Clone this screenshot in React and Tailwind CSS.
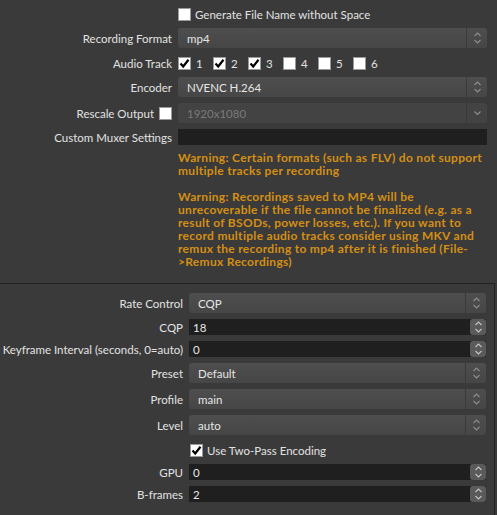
import React from 'react'

const font = { fontFamily: 'Lato, "Open Sans", sans-serif' }

const Check = ({ checked }) => (
    <span className="w-[13px] h-[13px] shrink-0 bg-white border border-[#9a9a9a] flex items-center justify-center">
        {checked && (
            <svg width="11" height="11" viewBox="0 0 11 11">
                <path d="M1.5 5.5 L4.2 8.5 L9.5 1.8" fill="none" stroke="#000" strokeWidth="2.2" />
            </svg>
        )}
    </span>
)

const UpDown = ({ color = '#8e8e8e', only }) => (
    <svg width="9" height="14" viewBox="0 0 9 14">
        {!only && <path d="M1.5 5 L4.5 2 L7.5 5" fill="none" stroke={color} strokeWidth="1.1" />}
        {!only && <path d="M1.5 9 L4.5 12 L7.5 9" fill="none" stroke={color} strokeWidth="1.1" />}
        {only && <path d="M1.5 5.5 L4.5 8.5 L7.5 5.5" fill="none" stroke={color} strokeWidth="1.1" />}
    </svg>
)

const Combo = ({ value, disabled, single }) => (
    <div className={`h-[20px] flex rounded-[3px] ${disabled ? 'bg-[#434343]' : 'bg-linear-to-b from-[#4e4e4e] to-[#464646]'}`}>
        <span className={`flex-1 flex items-center pl-[9px] ${disabled ? 'text-[#7a7a7a]' : 'text-[#e6e6e6]'}`}>{value}</span>
        <span className="w-[21px] border-l border-[#3a3a3a] flex items-center justify-center">
            <UpDown only={single} />
        </span>
    </div>
)

const Spin = ({ value }) => (
    <div className="h-[16px] flex bg-[#1f1f1f]">
        <span className="flex-1 flex items-center pl-[4px] text-[#e6e6e6]">{value}</span>
        <span className="w-[16px] rounded-[3px] bg-[#5a5a5a] flex items-center justify-center">
            <UpDown color="#c4c4c4" />
        </span>
    </div>
)

const Label = ({ children }) => (
    <span className="text-right text-[#e2e2e2] whitespace-nowrap self-center">{children}</span>
)

export default function App() {
    return (
        <div className="w-[497px] h-[515px] bg-[#3a3a3a] text-[11.5px] leading-[13px] overflow-hidden" style={font}>
            {/* top section */}
            <div className="h-[283px]">
                <div className="grid grid-cols-[172px_1fr] content-start gap-x-[6px] pr-[10px] pt-[5px]">
                    <span />
                    <div className="h-[18px] flex items-center gap-[4px] text-[#e2e2e2]">
                        <Check />
                        <span>Generate File Name without Space</span>
                    </div>

                    <div className="col-span-2 h-[5px]" />
                    <Label>Recording Format</Label>
                    <Combo value="mp4" />

                    <div className="col-span-2 h-[6px]" />
                    <Label>Audio Track</Label>
                    <div className="h-[18px] flex items-center">
                        {[1, 2, 3, 4, 5, 6].map(n => (
                            <span key={n} className="w-[35px] flex items-center gap-[5px] text-[#e2e2e2]">
                                <Check checked={n <= 3} />
                                <span>{n}</span>
                            </span>
                        ))}
                    </div>

                    <div className="col-span-2 h-[5px]" />
                    <Label>Encoder</Label>
                    <Combo value="NVENC H.264" />

                    <div className="col-span-2 h-[6px]" />
                    <div className="flex items-center justify-end gap-[5px]">
                        <span className="text-[#e2e2e2]">Rescale Output</span>
                        <Check />
                    </div>
                    <Combo value="1920x1080" disabled single />

                    <div className="col-span-2 h-[6px]" />
                    <Label>Custom Muxer Settings</Label>
                    <div className="h-[16px] bg-[#1f1f1f]" />

                    <span />
                    <div className="mt-[6px] font-bold text-[#d48f14] text-[12px] tracking-[0.3px]">
                        <p>Warning: Certain formats (such as FLV) do not support multiple tracks per recording</p>
                        <p className="mt-[13px]">Warning: Recordings saved to MP4 will be unrecoverable if the file cannot be finalized (e.g. as a result of BSODs, power losses, etc.). If you want to record multiple audio tracks consider using MKV and remux the recording to mp4 after it is finished (File-&gt;Remux Recordings)</p>
                    </div>
                </div>
            </div>

            {/* encoder settings group */}
            <div className="border-t border-r border-[#222222] w-[495px] h-[240px]">
                <div className="grid grid-cols-[183px_1fr] content-start gap-x-[6px] pr-[8px] pt-[9px]">
                    <Label>Rate Control</Label>
                    <Combo value="CQP" />

                    <div className="col-span-2 h-[6px]" />
                    <Label>CQP</Label>
                    <Spin value="18" />

                    <div className="col-span-2 h-[6px]" />
                    <Label>Keyframe Interval (seconds, 0=auto)</Label>
                    <Spin value="0" />

                    <div className="col-span-2 h-[6px]" />
                    <Label>Preset</Label>
                    <Combo value="Default" />

                    <div className="col-span-2 h-[6px]" />
                    <Label>Profile</Label>
                    <Combo value="main" />

                    <div className="col-span-2 h-[6px]" />
                    <Label>Level</Label>
                    <Combo value="auto" />

                    <div className="col-span-2 h-[6px]" />
                    <span />
                    <div className="h-[18px] flex items-center gap-[4px] pl-[1px] text-[#e2e2e2]">
                        <Check checked />
                        <span>Use Two-Pass Encoding</span>
                    </div>

                    <div className="col-span-2 h-[5px]" />
                    <Label>GPU</Label>
                    <Spin value="0" />

                    <div className="col-span-2 h-[6px]" />
                    <Label>B-frames</Label>
                    <Spin value="2" />
                </div>
            </div>
        </div>
    )
}
